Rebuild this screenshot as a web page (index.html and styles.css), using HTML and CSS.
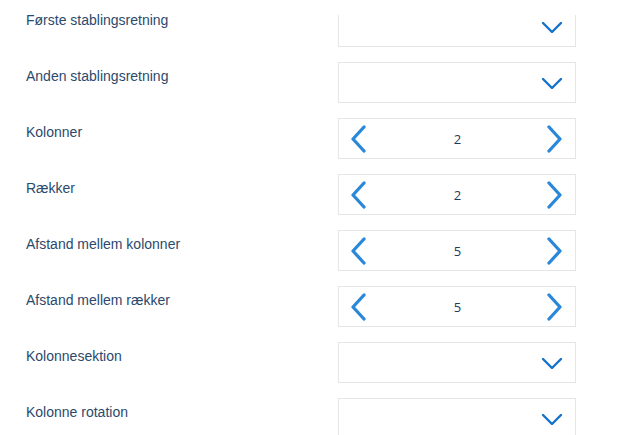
FILE: index.html
```html
<!DOCTYPE html>
<html>
<head>
<meta charset="utf-8">
<link rel="stylesheet" href="styles.css">
</head>
<body>
<div class="form">
  <div class="row">
    <div class="label">Første stablingsretning</div>
    <div class="box select clipped">
      <svg class="down" viewBox="0 0 20 11"><path d="M1 1 L10 10 L19 1"/></svg>
    </div>
  </div>
  <div class="row">
    <div class="label">Anden stablingsretning</div>
    <div class="box select">
      <svg class="down" viewBox="0 0 20 11"><path d="M1 1 L10 10 L19 1"/></svg>
    </div>
  </div>
  <div class="row">
    <div class="label">Kolonner</div>
    <div class="box stepper">
      <svg class="arrow" viewBox="0 0 16 28"><path d="M14 2 L3 14 L14 26"/></svg>
      <span class="value">2</span>
      <svg class="arrow" viewBox="0 0 16 28"><path d="M2 2 L13 14 L2 26"/></svg>
    </div>
  </div>
  <div class="row">
    <div class="label">Rækker</div>
    <div class="box stepper">
      <svg class="arrow" viewBox="0 0 16 28"><path d="M14 2 L3 14 L14 26"/></svg>
      <span class="value">2</span>
      <svg class="arrow" viewBox="0 0 16 28"><path d="M2 2 L13 14 L2 26"/></svg>
    </div>
  </div>
  <div class="row">
    <div class="label">Afstand mellem kolonner</div>
    <div class="box stepper">
      <svg class="arrow" viewBox="0 0 16 28"><path d="M14 2 L3 14 L14 26"/></svg>
      <span class="value">5</span>
      <svg class="arrow" viewBox="0 0 16 28"><path d="M2 2 L13 14 L2 26"/></svg>
    </div>
  </div>
  <div class="row">
    <div class="label">Afstand mellem rækker</div>
    <div class="box stepper">
      <svg class="arrow" viewBox="0 0 16 28"><path d="M14 2 L3 14 L14 26"/></svg>
      <span class="value">5</span>
      <svg class="arrow" viewBox="0 0 16 28"><path d="M2 2 L13 14 L2 26"/></svg>
    </div>
  </div>
  <div class="row">
    <div class="label">Kolonnesektion</div>
    <div class="box select">
      <svg class="down" viewBox="0 0 20 11"><path d="M1 1 L10 10 L19 1"/></svg>
    </div>
  </div>
  <div class="row">
    <div class="label">Kolonne rotation</div>
    <div class="box select">
      <svg class="down" viewBox="0 0 20 11"><path d="M1 1 L10 10 L19 1"/></svg>
    </div>
  </div>
</div>
</body>
</html>
```
FILE: styles.css
```css
html, body {
  margin: 0;
  padding: 0;
  background: #ffffff;
  overflow: hidden;
}
.form {
  padding: 6px 0 0 26px;
  display: flex;
  flex-direction: column;
  gap: 15px;
}
.row {
  display: flex;
  align-items: flex-start;
}
.label {
  width: 312px;
  padding-top: 6px;
  font-family: "Liberation Sans", Arial, sans-serif;
  font-size: 14px;
  line-height: 16px;
  color: #2b4a6c;
}
.box {
  box-sizing: border-box;
  width: 238px;
  height: 41px;
  border: 1px solid #e6e6e6;
  background: #fff;
  display: flex;
  align-items: center;
}
.clipped {
  clip-path: inset(9px 0 0 0);
}
.select {
  justify-content: flex-end;
  padding-right: 13px;
}
.down {
  width: 20px;
  height: 11px;
  margin-top: 2px;
  fill: none;
  stroke: #1372cc;
  stroke-width: 2.4;
  stroke-linecap: round;
  stroke-linejoin: round;
}
.stepper {
  justify-content: space-between;
  padding: 0 12px 0 11px;
}
.arrow {
  width: 16px;
  height: 28px;
  fill: none;
  stroke: #2b88d8;
  stroke-width: 3.3;
  stroke-linecap: round;
  stroke-linejoin: round;
}
.value {
  font-family: "Open Sans", sans-serif;
  font-size: 13px;
  color: #1d3a5c;
  margin-top: 1px;
  margin-left: 2px;
}
```
